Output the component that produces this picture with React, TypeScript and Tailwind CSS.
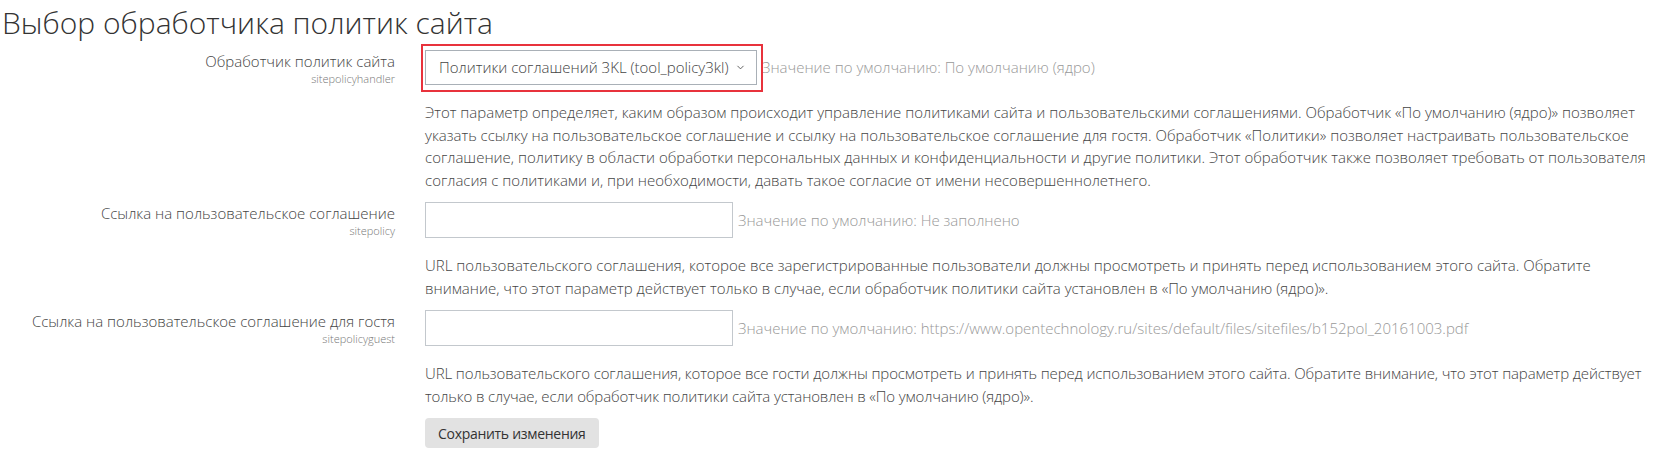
import React from 'react'
import { ChevronDown } from 'lucide-react'

type Setting = {
  label: string
  name: string
  defaultText: string
  description: string
  kind: 'select' | 'text'
  tight?: boolean
}

const settings: Setting[] = [
  {
    label: 'Обработчик политик сайта',
    name: 'sitepolicyhandler',
    defaultText: 'Значение по умолчанию: По умолчанию (ядро)',
    description:
      'Этот параметр определяет, каким образом происходит управление политиками сайта и пользовательскими соглашениями. Обработчик «По умолчанию (ядро)» позволяет указать ссылку на пользовательское соглашение и ссылку на пользовательское соглашение для гостя. Обработчик «Политики» позволяет настраивать пользовательское соглашение, политику в области обработки персональных данных и конфиденциальности и другие политики. Этот обработчик также позволяет требовать от пользователя согласия с политиками и, при необходимости, давать такое согласие от имени несовершеннолетнего.',
    kind: 'select',
  },
  {
    label: 'Ссылка на пользовательское соглашение',
    name: 'sitepolicy',
    defaultText: 'Значение по умолчанию: Не заполнено',
    description:
      'URL пользовательского соглашения, которое все зарегистрированные пользователи должны просмотреть и принять перед использованием этого сайта. Обратите внимание, что этот параметр действует только в случае, если обработчик политики сайта установлен в «По умолчанию (ядро)».',
    kind: 'text',
  },
  {
    label: 'Ссылка на пользовательское соглашение для гостя',
    name: 'sitepolicyguest',
    defaultText:
      'Значение по умолчанию: https://www.opentechnology.ru/sites/default/files/sitefiles/b152pol_20161003.pdf',
    description:
      'URL пользовательского соглашения, которое все гости должны просмотреть и принять перед использованием этого сайта. Обратите внимание, что этот параметр действует только в случае, если обработчик политики сайта установлен в «По умолчанию (ядро)».',
    kind: 'text',
    tight: true,
  },
]

function SettingRow({ s }: { s: Setting }) {
  return (
    <div className="flex mb-[11px]">
      <div className="w-[410px] shrink-0 pr-[15px] text-right">
        <div className="text-[15px] leading-[22.5px] font-light text-[#444]">{s.label}</div>
        <div className="text-[11px] leading-[12px] font-light text-[#777]">{s.name}</div>
      </div>
      <div className="min-w-0 flex-1 pl-[15px] pr-[13px]">
        <div className="flex items-center">
          {s.kind === 'select' ? (
            <div className="relative">
              <div className="flex h-[35px] w-[332px] items-center gap-[6px] whitespace-nowrap border border-[#a9b0b7] bg-white pl-[13px] text-[15px] font-light text-[#444]">
                <span>Политики соглашений 3KL (tool_policy3kl)</span>
                <ChevronDown size={11} strokeWidth={1.8} className="text-[#444]" />
              </div>
              {/* red highlight around the select */}
              <div className="pointer-events-none absolute -top-[6px] -bottom-[7px] -left-[4px] -right-[6px] border-2 border-[#e8323c]" />
            </div>
          ) : (
            <input
              type="text"
              className="h-[36px] w-[308px] border border-[#c3c8cd] bg-white px-3 text-[15px] outline-none"
            />
          )}
          <span className="ml-[5px] text-[15px] font-light text-[#999]">{s.defaultText}</span>
        </div>
        <p
          className={
            'mt-4 text-[15px] leading-[22.5px] font-light text-[#444] ' +
            (s.tight ? 'tracking-[-0.12px]' : '')
          }
        >
          {s.description}
        </p>
      </div>
    </div>
  )
}

export default function App() {
  return (
    <div className="min-h-[452px] bg-white font-['Open_Sans',sans-serif]">
      <h2 className="pt-[5px] pb-[10px] pl-[2px] text-[30px] leading-[35px] font-light text-[#333]">
        Выбор обработчика политик сайта
      </h2>
      {settings.map((s) => (
        <SettingRow key={s.name} s={s} />
      ))}
      <div className="pl-[425px]">
        <button className="h-[30px] rounded-[4px] bg-[#e2e2e2] px-[13px] text-[14px] tracking-[-0.3px] text-[#333]">
          Сохранить изменения
        </button>
      </div>
    </div>
  )
}
